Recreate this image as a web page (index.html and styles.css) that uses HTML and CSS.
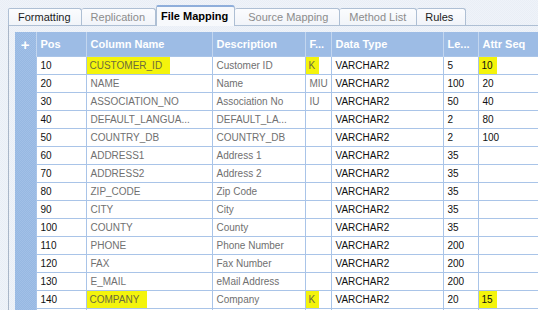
FILE: index.html
```html
<!DOCTYPE html>
<html lang="en">
<head>
    <meta charset="UTF-8">
    <title>File Mapping</title>
    <link rel="stylesheet" href="styles.css">
</head>
<body>
    <!-- Tab strip -->
    <div class="tabs">
        <div class="tab">Formatting</div>
        <div class="tab muted">Replication</div>
        <div class="tab active">File Mapping</div>
        <div class="tab muted">Source Mapping</div>
        <div class="tab muted">Method List</div>
        <div class="tab last">Rules</div>
    </div>

    <!-- Mapping grid -->
    <div class="panel">
        <table class="grid">
            <colgroup>
                <col class="c-gut"><col class="c-pos"><col class="c-name"><col class="c-desc">
                <col class="c-f"><col class="c-type"><col class="c-len"><col class="c-seq">
            </colgroup>
            <thead>
                <tr>
                    <th class="gut plus">+</th>
                    <th>Pos</th>
                    <th>Column Name</th>
                    <th>Description</th>
                    <th>F...</th>
                    <th>Data Type</th>
                    <th>Le...</th>
                    <th>Attr Seq</th>
                </tr>
            </thead>
            <tbody>
                <tr><td class="gut"></td><td>10</td><td class="dim"><span class="mark wide">CUSTOMER_ID</span></td><td class="dim">Customer ID</td><td class="dim"><span class="mark">K</span></td><td>VARCHAR2</td><td>5</td><td><span class="mark">10</span></td></tr>
                <tr><td class="gut"></td><td>20</td><td class="dim">NAME</td><td class="dim">Name</td><td class="dim">MIU</td><td>VARCHAR2</td><td>100</td><td>20</td></tr>
                <tr><td class="gut"></td><td>30</td><td class="dim">ASSOCIATION_NO</td><td class="dim">Association No</td><td class="dim">IU</td><td>VARCHAR2</td><td>50</td><td>40</td></tr>
                <tr><td class="gut"></td><td>40</td><td class="dim">DEFAULT_LANGUA...</td><td class="dim">DEFAULT_LA...</td><td class="dim"></td><td>VARCHAR2</td><td>2</td><td>80</td></tr>
                <tr><td class="gut"></td><td>50</td><td class="dim">COUNTRY_DB</td><td class="dim">COUNTRY_DB</td><td class="dim"></td><td>VARCHAR2</td><td>2</td><td>100</td></tr>
                <tr><td class="gut"></td><td>60</td><td class="dim">ADDRESS1</td><td class="dim">Address 1</td><td class="dim"></td><td>VARCHAR2</td><td>35</td><td></td></tr>
                <tr><td class="gut"></td><td>70</td><td class="dim">ADDRESS2</td><td class="dim">Address 2</td><td class="dim"></td><td>VARCHAR2</td><td>35</td><td></td></tr>
                <tr><td class="gut"></td><td>80</td><td class="dim">ZIP_CODE</td><td class="dim">Zip Code</td><td class="dim"></td><td>VARCHAR2</td><td>35</td><td></td></tr>
                <tr><td class="gut"></td><td>90</td><td class="dim">CITY</td><td class="dim">City</td><td class="dim"></td><td>VARCHAR2</td><td>35</td><td></td></tr>
                <tr><td class="gut"></td><td>100</td><td class="dim">COUNTY</td><td class="dim">County</td><td class="dim"></td><td>VARCHAR2</td><td>35</td><td></td></tr>
                <tr><td class="gut"></td><td>110</td><td class="dim">PHONE</td><td class="dim">Phone Number</td><td class="dim"></td><td>VARCHAR2</td><td>200</td><td></td></tr>
                <tr><td class="gut"></td><td>120</td><td class="dim">FAX</td><td class="dim">Fax Number</td><td class="dim"></td><td>VARCHAR2</td><td>200</td><td></td></tr>
                <tr><td class="gut"></td><td>130</td><td class="dim">E_MAIL</td><td class="dim">eMail Address</td><td class="dim"></td><td>VARCHAR2</td><td>200</td><td></td></tr>
                <tr><td class="gut"></td><td>140</td><td class="dim"><span class="mark wide">COMPANY</span></td><td class="dim">Company</td><td class="dim"><span class="mark">K</span></td><td>VARCHAR2</td><td>20</td><td><span class="mark">15</span></td></tr>
                <tr><td class="gut"></td><td></td><td></td><td></td><td></td><td></td><td></td><td></td></tr>
            </tbody>
        </table>
    </div>
</body>
</html>
```

FILE: styles.css
```css
* {
    margin: 0;
    padding: 0;
    box-sizing: border-box;
}

body {
    width: 538px;
    height: 310px;
    overflow: hidden;
    font-family: 'Liberation Sans', Arial, sans-serif;
    background: repeating-conic-gradient(#eff3f9 0 25%, #e9eef6 0 50%) 0 0 / 2px 2px;
}

/* tabs */

.tabs {
    display: flex;
    align-items: flex-end;
    height: 25px;
    padding-left: 8px;
    position: relative;
    z-index: 1;
}

.tab {
    height: 17px;
    line-height: 16px;
    padding: 0 10px 0 9px;
    font-size: 11px;
    color: #1c1c1c;
    background: linear-gradient(#fbfcfe, #f1f4f9);
    border: 1px solid #aebfd4;
    border-bottom: none;
    border-left: none;
    border-radius: 2px 3px 0 0;
}

.tab:first-child {
    border-left: 1px solid #aebfd4;
}

.tab.muted {
    color: #8c8c8c;
}

.tab.last {
    padding: 0 12px 0 8px;
}

.tab.active {
    height: 21px;
    line-height: 19px;
    margin-bottom: -1px;
    padding: 0 6px 0 4px;
    font-weight: bold;
    color: #000;
    background: #f7f9fc;
    border-top: 2px solid #8eaedb;
    border-left: 1px solid #aebfd4;
}

.tab.active + .tab {
    border-left: none;
    padding: 0 11px 0 13px;
}

/* panel + grid */

.panel {
    margin-left: 8px;
    border-left: 1px solid #a9b6c8;
    border-top: 1px solid #aebfd4;
    padding: 6px 0 0 6px;
    height: 290px;
    overflow: hidden;
}

.grid {
    border-collapse: collapse;
    table-layout: fixed;
    width: 543px;
    font-size: 10px;
}

.c-gut  { width: 21px; }
.c-pos  { width: 50px; }
.c-name { width: 126px; }
.c-desc { width: 93px; }
.c-f    { width: 26px; }
.c-type { width: 112px; }
.c-len  { width: 35px; }
.c-seq  { width: 80px; }

.grid th {
    height: 24px;
    padding: 0 4px;
    text-align: left;
    font-size: 11px;
    font-weight: bold;
    color: #fff;
    white-space: nowrap;
    overflow: hidden;
    background: repeating-conic-gradient(#a2c0e7 0 25%, #97b8e2 0 50%) 0 0 / 2px 2px;
    border-left: 1px solid #c3d6ef;
}

.grid th.plus {
    font-size: 15px;
    text-align: center;
    padding: 0;
    border-left: none;
}

.grid td {
    height: 18px;
    line-height: 17px;
    padding: 0 4px;
    white-space: nowrap;
    overflow: hidden;
    color: #111;
    background: #fff;
    border: 1px solid #a9c4e8;
}

.grid td.dim {
    color: #707070;
}

.grid td.gut {
    border: none;
    background: repeating-conic-gradient(#a2c0e7 0 25%, #97b8e2 0 50%) 0 0 / 2px 2px;
}

.mark {
    display: inline-block;
    height: 17px;
    margin-left: -4px;
    padding: 0 4px 0 3px;
    background: #f4f40c;
    color: #6c6c3c;
}

.grid td:last-child .mark {
    color: #111;
}

.mark.wide {
    padding-right: 8px;
}
```
